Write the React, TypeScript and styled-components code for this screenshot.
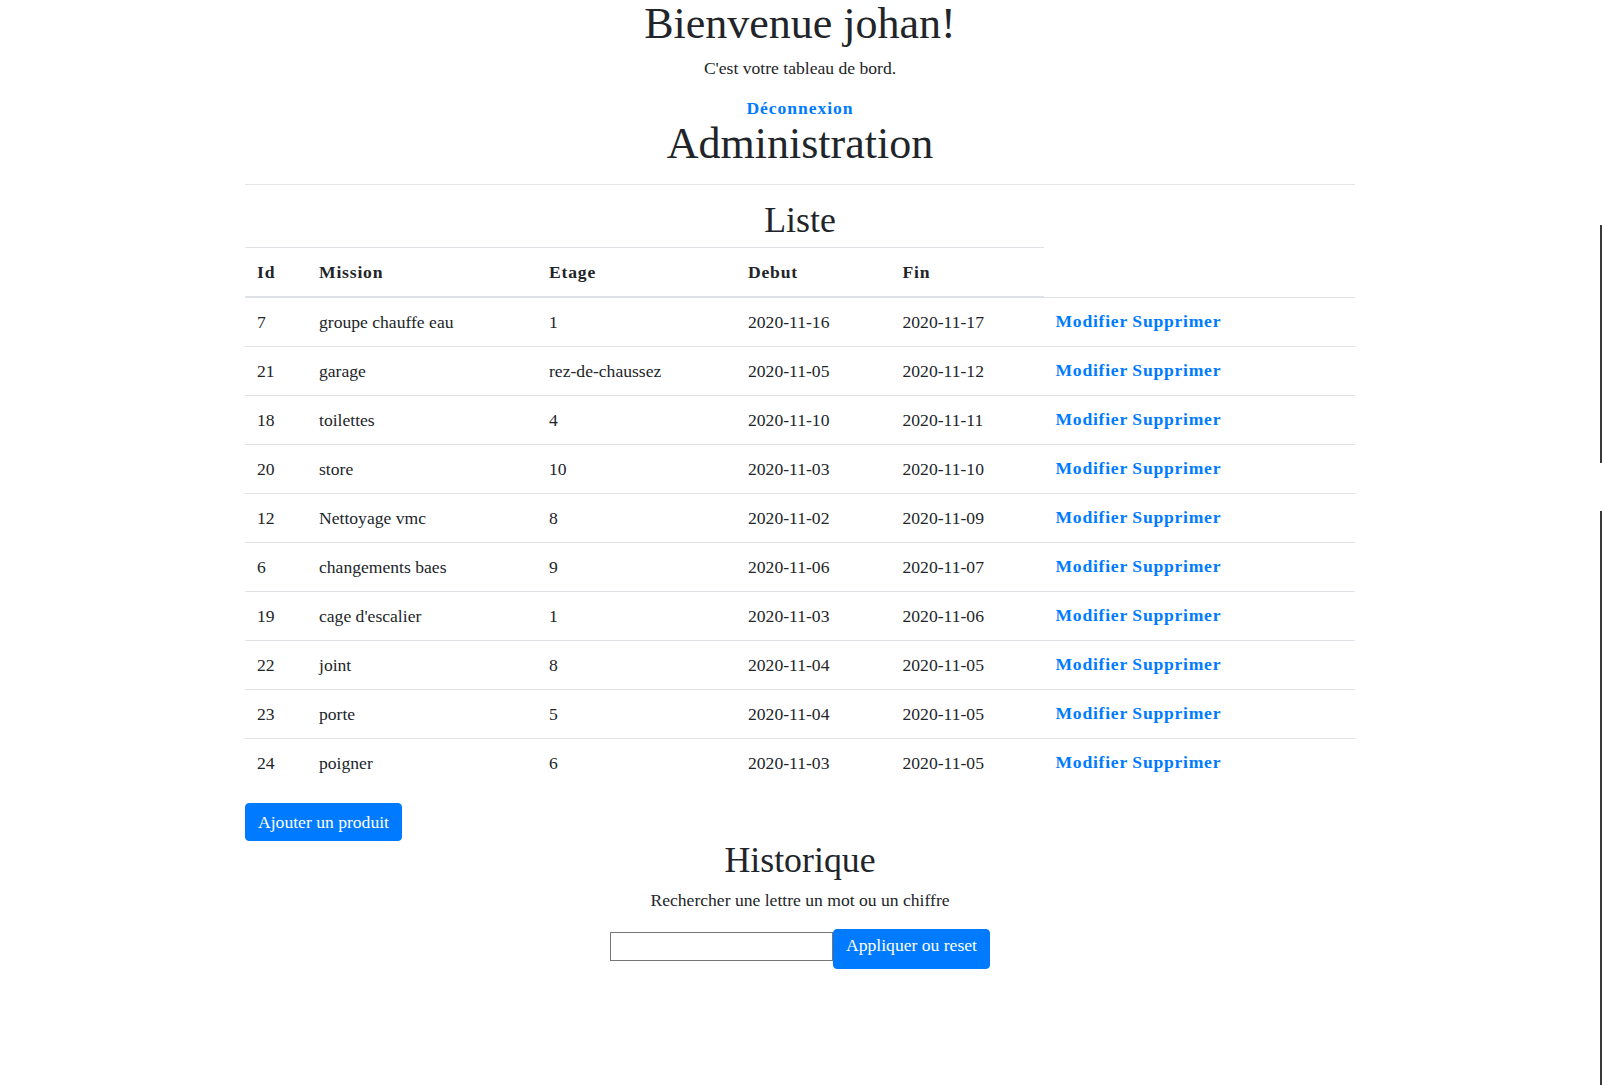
import React from "react";
import styled, { createGlobalStyle } from "styled-components";

const GlobalStyle = createGlobalStyle`
  *, *::before, *::after { box-sizing: border-box; }
  html, body { margin: 0; padding: 0; background: #fff; }
  body {
    font-family: "Liberation Serif", "Times New Roman", serif;
    font-size: 17.6px;
    line-height: 24px;
    color: #212529;
  }
`;

const Page = styled.div`
  width: 1600px;
`;

const Container = styled.main`
  max-width: 1140px;
  margin: 0 auto;
  padding: 0 15px;
`;

const Header = styled.header`
  text-align: center;
`;

const Title = styled.h1`
  margin: 0 0 8px;
  font-size: 44px;
  line-height: 48px;
  font-weight: 400;
`;

const Lead = styled.p<{ $center?: boolean }>`
  margin: 0 0 16px;
  text-align: ${(p) => (p.$center ? "center" : "inherit")};
`;

const LogoutRow = styled.div`
  text-align: center;
`;

const TextLink = styled.a<{ $wide?: boolean }>`
  color: #007bff;
  font-weight: 700;
  letter-spacing: ${(p) => (p.$wide ? "0.95px" : "0.75px")};
  text-decoration: none;
  cursor: pointer;
`;

const Divider = styled.hr`
  margin: 16px 0;
  border: 0;
  border-top: 1px solid rgba(0, 0, 0, 0.1);
`;

const SectionTitle = styled.h2`
  margin: 0 0 8px;
  font-size: 35.8px;
  line-height: 38.4px;
  font-weight: 400;
  text-align: center;
`;

const Table = styled.table`
  width: 100%;
  border-collapse: collapse;
  table-layout: fixed;
  margin-bottom: 16px;
  color: #212529;
`;

const HeadCell = styled.th`
  padding: 12px;
  text-align: left;
  vertical-align: bottom;
  font-weight: 700;
  letter-spacing: 0.8px;
  border-top: 1px solid #dee2e6;
  border-bottom: 2px solid #dee2e6;
`;

const Cell = styled.td`
  padding: 12px;
  vertical-align: top;
  border-top: 1px solid #dee2e6;
  white-space: nowrap;
`;

const ActionCell = styled(Cell)`
  padding-top: 11px;
  padding-bottom: 13px;
`;

const ButtonRow = styled.div``;

const PrimaryButton = styled.button<{ $tall?: boolean }>`
  display: inline-block;
  font-family: inherit;
  font-size: 17.6px;
  line-height: 24px;
  font-weight: 400;
  color: #fff;
  background: #007bff;
  border: 1px solid #007bff;
  border-radius: 4px;
  padding: ${(p) => (p.$tall ? "3px 12px 11px" : "6px 12px")};
  cursor: pointer;
  white-space: nowrap;
`;

const SearchForm = styled.form`
  display: flex;
  justify-content: center;
  align-items: flex-start;
  padding-top: 1px;
`;

const SearchInput = styled.input`
  width: 223px;
  height: 29px;
  margin-top: 3px;
  padding: 1px 2px;
  font-family: inherit;
  font-size: 17.6px;
  border: 1px solid #767676;
  border-radius: 0;
  background: #fff;
  outline: none;
`;

const EdgeTrack = styled.div`
  position: fixed;
  top: 0;
  right: 0;
  width: 2px;
  height: 100vh;
  display: flex;
  flex-direction: column;
`;

const EdgeSegment = styled.div<{ $h: string; $gap: number }>`
  margin-top: ${(p) => p.$gap}px;
  height: ${(p) => p.$h};
  background: #393939;
`;

type Row = { id: number; mission: string; etage: string; debut: string; fin: string };

const rows: Row[] = [
  { id: 7, mission: "groupe chauffe eau", etage: "1", debut: "2020-11-16", fin: "2020-11-17" },
  { id: 21, mission: "garage", etage: "rez-de-chaussez", debut: "2020-11-05", fin: "2020-11-12" },
  { id: 18, mission: "toilettes", etage: "4", debut: "2020-11-10", fin: "2020-11-11" },
  { id: 20, mission: "store", etage: "10", debut: "2020-11-03", fin: "2020-11-10" },
  { id: 12, mission: "Nettoyage vmc", etage: "8", debut: "2020-11-02", fin: "2020-11-09" },
  { id: 6, mission: "changements baes", etage: "9", debut: "2020-11-06", fin: "2020-11-07" },
  { id: 19, mission: "cage d'escalier", etage: "1", debut: "2020-11-03", fin: "2020-11-06" },
  { id: 22, mission: "joint", etage: "8", debut: "2020-11-04", fin: "2020-11-05" },
  { id: 23, mission: "porte", etage: "5", debut: "2020-11-04", fin: "2020-11-05" },
  { id: 24, mission: "poigner", etage: "6", debut: "2020-11-03", fin: "2020-11-05" },
];

const colWidths = [62, 230, 199, 154.5, 153];

export default function App() {
  return (
    <Page>
      <GlobalStyle />
      <Container>
        <Header>
          <Title>Bienvenue johan!</Title>
          <Lead>C'est votre tableau de bord.</Lead>
          <LogoutRow>
            <TextLink $wide>Déconnexion</TextLink>
          </LogoutRow>
          <Title>Administration</Title>
        </Header>
        <Divider />
        <SectionTitle>Liste</SectionTitle>
        <Table>
          <colgroup>
            {colWidths.map((w, i) => (
              <col key={i} style={{ width: w }} />
            ))}
            <col />
          </colgroup>
          <thead>
            <tr>
              <HeadCell>Id</HeadCell>
              <HeadCell>Mission</HeadCell>
              <HeadCell>Etage</HeadCell>
              <HeadCell>Debut</HeadCell>
              <HeadCell>Fin</HeadCell>
            </tr>
          </thead>
          <tbody>
            {rows.map((r) => (
              <tr key={r.id}>
                <Cell>{r.id}</Cell>
                <Cell>{r.mission}</Cell>
                <Cell>{r.etage}</Cell>
                <Cell>{r.debut}</Cell>
                <Cell>{r.fin}</Cell>
                <ActionCell>
                  <TextLink>Modifier</TextLink> <TextLink>Supprimer</TextLink>
                </ActionCell>
              </tr>
            ))}
          </tbody>
        </Table>
        <ButtonRow>
          <PrimaryButton type="button">Ajouter un produit</PrimaryButton>
        </ButtonRow>
        <SectionTitle>Historique</SectionTitle>
        <Lead $center>Rechercher une lettre un mot ou un chiffre</Lead>
        <SearchForm onSubmit={(e) => e.preventDefault()}>
          <SearchInput type="text" />
          <PrimaryButton type="submit" $tall>
            Appliquer ou reset
          </PrimaryButton>
        </SearchForm>
      </Container>
      <EdgeTrack>
        <EdgeSegment $gap={225} $h="238px" />
        <EdgeSegment $gap={48} $h="574px" />
      </EdgeTrack>
    </Page>
  );
}
